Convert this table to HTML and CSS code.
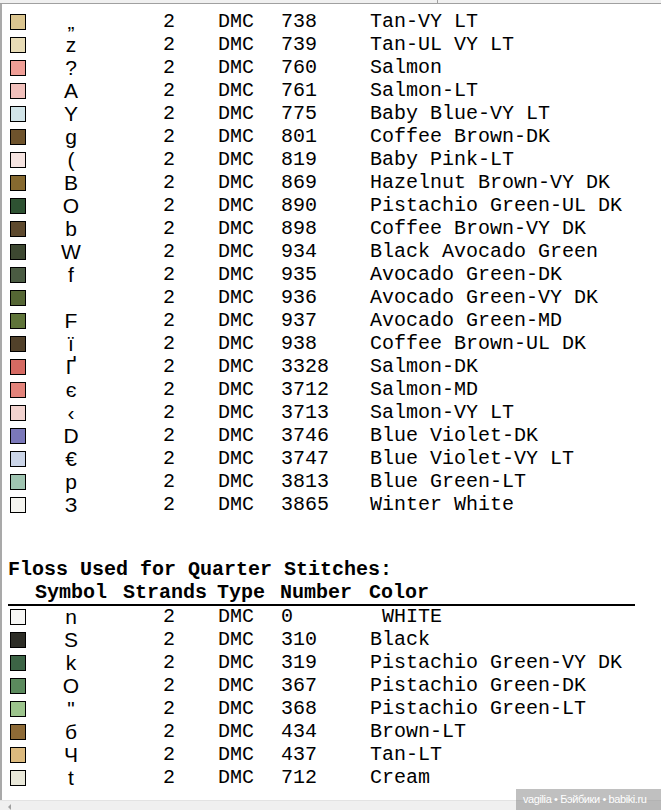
FILE: index.html
```html
<!DOCTYPE html>
<html>
<head>
<meta charset="utf-8">
<link rel="stylesheet" href="styles.css">
</head>
<body>
<div class="window">
  <div class="topedge"><div class="topedge-left"></div><div class="topedge-right"></div></div>
  <div class="frame">
    <div class="viewport">
      <div class="list">
        <div class="row"><span class="sw" style="background:#dbc58f"></span><span class="sym">„</span><span class="st">2</span><span class="ty">DMC</span><span class="num">738</span><span class="col">Tan-VY LT</span></div>
        <div class="row"><span class="sw" style="background:#e8dcb6"></span><span class="sym">z</span><span class="st">2</span><span class="ty">DMC</span><span class="num">739</span><span class="col">Tan-UL VY LT</span></div>
        <div class="row"><span class="sw" style="background:#ef9e96"></span><span class="sym">?</span><span class="st">2</span><span class="ty">DMC</span><span class="num">760</span><span class="col">Salmon</span></div>
        <div class="row"><span class="sw" style="background:#f1c0bb"></span><span class="sym">A</span><span class="st">2</span><span class="ty">DMC</span><span class="num">761</span><span class="col">Salmon-LT</span></div>
        <div class="row"><span class="sw" style="background:#d1e4e8"></span><span class="sym">Y</span><span class="st">2</span><span class="ty">DMC</span><span class="num">775</span><span class="col">Baby Blue-VY LT</span></div>
        <div class="row"><span class="sw" style="background:#6e532c"></span><span class="sym">g</span><span class="st">2</span><span class="ty">DMC</span><span class="num">801</span><span class="col">Coffee Brown-DK</span></div>
        <div class="row"><span class="sw" style="background:#f5e3e0"></span><span class="sym">(</span><span class="st">2</span><span class="ty">DMC</span><span class="num">819</span><span class="col">Baby Pink-LT</span></div>
        <div class="row"><span class="sw" style="background:#86692f"></span><span class="sym">B</span><span class="st">2</span><span class="ty">DMC</span><span class="num">869</span><span class="col">Hazelnut Brown-VY DK</span></div>
        <div class="row"><span class="sw" style="background:#2e5232"></span><span class="sym">O</span><span class="st">2</span><span class="ty">DMC</span><span class="num">890</span><span class="col">Pistachio Green-UL DK</span></div>
        <div class="row"><span class="sw" style="background:#5e4a2e"></span><span class="sym">b</span><span class="st">2</span><span class="ty">DMC</span><span class="num">898</span><span class="col">Coffee Brown-VY DK</span></div>
        <div class="row"><span class="sw" style="background:#3d4831"></span><span class="sym">W</span><span class="st">2</span><span class="ty">DMC</span><span class="num">934</span><span class="col">Black Avocado Green</span></div>
        <div class="row"><span class="sw" style="background:#4a5b42"></span><span class="sym">f</span><span class="st">2</span><span class="ty">DMC</span><span class="num">935</span><span class="col">Avocado Green-DK</span></div>
        <div class="row"><span class="sw" style="background:#556634"></span><span class="sym"></span><span class="st">2</span><span class="ty">DMC</span><span class="num">936</span><span class="col">Avocado Green-VY DK</span></div>
        <div class="row"><span class="sw" style="background:#5f7439"></span><span class="sym">F</span><span class="st">2</span><span class="ty">DMC</span><span class="num">937</span><span class="col">Avocado Green-MD</span></div>
        <div class="row"><span class="sw" style="background:#51412a"></span><span class="sym">ї</span><span class="st">2</span><span class="ty">DMC</span><span class="num">938</span><span class="col">Coffee Brown-UL DK</span></div>
        <div class="row"><span class="sw" style="background:#d56a62"></span><span class="sym">Ґ</span><span class="st">2</span><span class="ty">DMC</span><span class="num">3328</span><span class="col">Salmon-DK</span></div>
        <div class="row"><span class="sw" style="background:#e2837a"></span><span class="sym">є</span><span class="st">2</span><span class="ty">DMC</span><span class="num">3712</span><span class="col">Salmon-MD</span></div>
        <div class="row"><span class="sw" style="background:#f2d3cf"></span><span class="sym">‹</span><span class="st">2</span><span class="ty">DMC</span><span class="num">3713</span><span class="col">Salmon-VY LT</span></div>
        <div class="row"><span class="sw" style="background:#7a78b9"></span><span class="sym">D</span><span class="st">2</span><span class="ty">DMC</span><span class="num">3746</span><span class="col">Blue Violet-DK</span></div>
        <div class="row"><span class="sw" style="background:#cbd5e8"></span><span class="sym">€</span><span class="st">2</span><span class="ty">DMC</span><span class="num">3747</span><span class="col">Blue Violet-VY LT</span></div>
        <div class="row"><span class="sw" style="background:#9fc4b1"></span><span class="sym">р</span><span class="st">2</span><span class="ty">DMC</span><span class="num">3813</span><span class="col">Blue Green-LT</span></div>
        <div class="row"><span class="sw" style="background:#f5f5f0"></span><span class="sym">З</span><span class="st">2</span><span class="ty">DMC</span><span class="num">3865</span><span class="col">Winter White</span></div>
      </div>

      <div class="section">
        <div class="title">Floss Used for Quarter Stitches:</div>
        <div class="head"><span>Symbol</span><span>Strands</span><span>Type</span><span>Number</span><span>Color</span></div>
        <div class="list">
          <div class="row"><span class="sw" style="background:#f7f7f5"></span><span class="sym">n</span><span class="st">2</span><span class="ty">DMC</span><span class="num">0</span><span class="col"> WHITE</span></div>
          <div class="row"><span class="sw" style="background:#2d2d26"></span><span class="sym">S</span><span class="st">2</span><span class="ty">DMC</span><span class="num">310</span><span class="col">Black</span></div>
          <div class="row"><span class="sw" style="background:#3c6445"></span><span class="sym">k</span><span class="st">2</span><span class="ty">DMC</span><span class="num">319</span><span class="col">Pistachio Green-VY DK</span></div>
          <div class="row"><span class="sw" style="background:#5b8a5d"></span><span class="sym">O</span><span class="st">2</span><span class="ty">DMC</span><span class="num">367</span><span class="col">Pistachio Green-DK</span></div>
          <div class="row"><span class="sw" style="background:#9cc48c"></span><span class="sym">"</span><span class="st">2</span><span class="ty">DMC</span><span class="num">368</span><span class="col">Pistachio Green-LT</span></div>
          <div class="row"><span class="sw" style="background:#8d6a36"></span><span class="sym">б</span><span class="st">2</span><span class="ty">DMC</span><span class="num">434</span><span class="col">Brown-LT</span></div>
          <div class="row"><span class="sw" style="background:#dcba7e"></span><span class="sym">Ч</span><span class="st">2</span><span class="ty">DMC</span><span class="num">437</span><span class="col">Tan-LT</span></div>
          <div class="row"><span class="sw" style="background:#e9e8d9"></span><span class="sym">t</span><span class="st">2</span><span class="ty">DMC</span><span class="num">712</span><span class="col">Cream</span></div>
          <div class="row"><span class="sw sw-hidden"></span><span class="sym"></span><span class="st">2</span><span class="ty"></span><span class="num">738</span><span class="col"></span></div>
        </div>
      </div>
    </div>
    <div class="gapstrip"></div>
  </div>
  <div class="hscroll"><span class="arrow"></span></div>
  <div class="watermark">vagilia • Бэйбики • babiki.ru</div>
</div>
</body>
</html>
```

FILE: styles.css
```css
* { box-sizing: border-box; }
html, body { margin: 0; padding: 0; background: #fff; }

.window {
  position: relative;
  width: 661px;
  height: 810px;
  overflow: hidden;
  display: flex;
  flex-direction: column;
  background: #fff;
  font-family: "Liberation Mono", "Courier New", monospace;
  font-size: 20px;
  color: #000;
}

.topedge {
  height: 4px;
  flex: none;
  display: flex;
  background: #f0f0f0;
  border-bottom: 1px solid #a0a0a0;
}
.topedge-left { width: 438px; border-right: 1px solid #a0a0a0; }
.topedge-right { flex: 1; }

.frame {
  flex: none;
  height: 796px;
  border-left: 2px solid #a9a9a9;
  display: flex;
  flex-direction: column;
}

.viewport {
  flex: none;
  height: 789px;
  overflow: hidden;
  padding-top: 6px;
}

.gapstrip { flex: none; height: 7px; background: #fff; }

.list { display: flex; flex-direction: column; }

.row {
  display: grid;
  grid-template-columns: 30px 62px 61px 55px 63px 89px 1fr;
  height: 23px;
  line-height: 23px;
  padding-left: 8px;
  white-space: pre;
}

.sw {
  width: 16px;
  height: 16px;
  margin-top: 4px;
  border: 1px solid #000;
}
.sw-hidden { visibility: hidden; }

.sym {
  font-family: "Liberation Sans", Arial, "DejaVu Sans", sans-serif;
  font-size: 21px;
  text-align: center;
}

.st { grid-column: 4; }

.section {
  margin-top: 42px;
  margin-left: 6px;
  width: 627px;
}
.section .row { padding-left: 2px; }

.title {
  font-weight: bold;
  height: 23px;
  line-height: 23px;
  white-space: pre;
}

.head {
  display: grid;
  grid-template-columns: 88px 94px 63px 89px 1fr;
  height: 25px;
  line-height: 23px;
  padding-left: 27px;
  font-weight: bold;
  border-bottom: 2px solid #000;
  margin-bottom: -1px;
}

.hscroll {
  flex: none;
  height: 10px;
  background: #f0f0f0;
  border-top: 1px solid #e3e3e3;
  padding-left: 8px;
  padding-top: 3px;
}
.arrow {
  display: block;
  width: 0;
  height: 0;
  border-top: 3px solid transparent;
  border-bottom: 3px solid transparent;
  border-right: 3px solid #a0a0a0;
}

.watermark {
  position: absolute;
  right: 0;
  bottom: 0;
  width: 145px;
  height: 21px;
  padding-left: 7px;
  line-height: 21px;
  background: rgba(140, 140, 140, 0.55);
  color: #fff;
  font-family: "Liberation Sans", Arial, sans-serif;
  font-size: 11px;
  letter-spacing: -0.4px;
  white-space: nowrap;
}
```
